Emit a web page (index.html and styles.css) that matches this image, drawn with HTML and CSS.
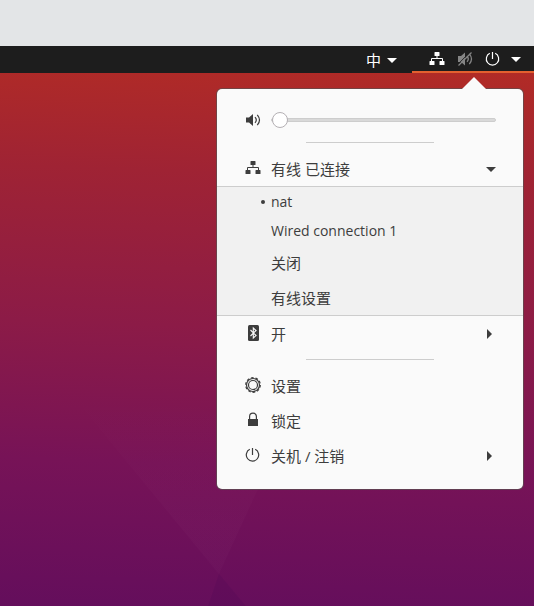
FILE: index.html
```html
<!DOCTYPE html>
<html lang="zh-CN">
<head>
<meta charset="utf-8">
<meta name="viewport" content="width=device-width, initial-scale=1">
<title>系统菜单</title>
<link rel="stylesheet" href="styles.css">
</head>
<body>
<svg class="sprite" aria-hidden="true">
  <symbol id="network" viewBox="0 0 16 16">
    <path fill="currentColor" d="M6 1h4q.5 0 .5.5v3q0 .5-.5.5H8.500v2H13q1 0 1 1v2h1q.5 0 .5.5v3q0 .5-.5.5h-4q-.5 0-.5-.5v-3q0-.5.5-.5h2V8H3v2h2q.5 0 .5.5v3q0 .5-.5.5H1q-.5 0-.5-.5v-3q0-.5.5-.5h1V8q0-1 1-1h4.500V5H6q-.5 0-.5-.5v-3Q5.500 1 6 1z"/>
  </symbol>
  <symbol id="speaker" viewBox="0 0 16 16">
    <path fill="currentColor" d="M1 5.500h3L8 2v12l-4-3.500H1z"/>
    <path fill="none" stroke="currentColor" stroke-width="1.200" d="M10 5.200q2.600 2.800 0 5.600M12.300 2.800q4.400 5.200 0 10.400"/>
  </symbol>
  <symbol id="muted" viewBox="0 0 16 16">
    <path fill="currentColor" d="M1 5h3l4-3.500v13L4 11H1z"/>
    <path fill="none" stroke="currentColor" stroke-width="1.300" d="M10 5.200q2.600 2.800 0 5.600M12.300 2.800q4.400 5.200 0 10.400"/>
    <path stroke="#1d1d1d" stroke-width="1" d="M1 13.200 13.200 1"/>
    <path stroke="currentColor" stroke-width="1.200" d="M1.500 14.500 14.500 1.500"/>
  </symbol>
  <symbol id="power" viewBox="0 0 16 16">
    <path fill="none" stroke="currentColor" stroke-width="1.200" d="M4.800 2.300a6.200 6.200 0 1 0 5.400 0M7.500 1v7"/>
  </symbol>
  <symbol id="bluetooth" viewBox="0 0 16 16">
    <rect x="3" y="0" width="11" height="16" rx="1.500" fill="currentColor"/>
    <path fill="none" stroke="#fafafa" stroke-width="1.100" d="m5.500 5 5.600 5.500-2.800 2.500V3L11.100 5.500l-5.600 5.500"/>
  </symbol>
  <symbol id="gear" viewBox="0 0 16 16">
    <circle cx="8" cy="8" r="7.300" fill="none" stroke="currentColor" stroke-width="1.200" stroke-dasharray="2.700 1.887"/>
    <circle cx="8" cy="8" r="6.500" fill="none" stroke="currentColor" stroke-width="1.200"/>
    <circle cx="8" cy="8" r="4.500" fill="none" stroke="currentColor" stroke-width="1.200"/>
  </symbol>
  <symbol id="lock" viewBox="0 0 16 16">
    <path fill="currentColor" d="M3 7h10v7H3z"/>
    <path fill="none" stroke="currentColor" stroke-width="1.200" d="M4.600 7V4.600a3.400 3.400 0 0 1 6.800 0V7"/>
  </symbol>
  <symbol id="down" viewBox="0 0 10 10">
    <path fill="currentColor" d="M0 3h10L5 8z"/>
  </symbol>
  <symbol id="right" viewBox="0 0 10 10">
    <path fill="currentColor" d="M1 0v10l5-5z"/>
  </symbol>
</svg>

<div class="window-edge"></div>
<header class="topbar">
  <button class="input-source" type="button" aria-label="输入法">中<svg class="arrow"><use href="#down"/></svg></button>
  <button class="system" type="button" aria-label="系统" aria-expanded="true">
    <svg class="icon"><use href="#network"/></svg>
    <svg class="icon dim"><use href="#muted"/></svg>
    <svg class="icon"><use href="#power"/></svg>
    <svg class="arrow"><use href="#down"/></svg>
  </button>
</header>

<main class="desktop">
  <div class="menu">
    <div class="volume">
      <svg class="icon"><use href="#speaker"/></svg>
      <input class="slider" type="range" min="0" max="100" value="0" aria-label="音量">
    </div>
    <hr class="separator">
    <button class="item" type="button" aria-expanded="true">
      <svg class="icon"><use href="#network"/></svg>
      <span class="label">有线 已连接</span>
      <svg class="arrow"><use href="#down"/></svg>
    </button>
    <div class="submenu">
      <button class="subitem latin current" type="button">nat</button>
      <button class="subitem latin" type="button">Wired connection 1</button>
      <button class="subitem" type="button">关闭</button>
      <button class="subitem" type="button">有线设置</button>
    </div>
    <button class="item" type="button">
      <svg class="icon"><use href="#bluetooth"/></svg>
      <span class="label">开</span>
      <svg class="arrow"><use href="#right"/></svg>
    </button>
    <hr class="separator">
    <button class="item" type="button">
      <svg class="icon"><use href="#gear"/></svg>
      <span class="label">设置</span>
    </button>
    <button class="item" type="button">
      <svg class="icon"><use href="#lock"/></svg>
      <span class="label">锁定</span>
    </button>
    <button class="item" type="button">
      <svg class="icon"><use href="#power"/></svg>
      <span class="label">关机 / 注销</span>
      <svg class="arrow"><use href="#right"/></svg>
    </button>
  </div>
</main>
</body>
</html>
```
FILE: styles.css
```css
* {
  box-sizing: border-box;
}

body {
  display: flex;
  flex-direction: column;
  min-height: 100vh;
  margin: 0;
  font: 15px/20px "Open Sans", "Noto Sans CJK SC", sans-serif;
  color: #3d3d3d;
}

button {
  margin: 0;
  padding: 0;
  border: 0;
  background: none;
  color: inherit;
  font: inherit;
  text-align: left;
}

.sprite {
  display: none;
}

.icon {
  flex: none;
  width: 16px;
  height: 16px;
}

.arrow {
  flex: none;
  width: 10px;
  height: 10px;
}

.window-edge {
  height: 46px;
  background: #e3e5e7;
}

.topbar {
  display: flex;
  justify-content: flex-end;
  height: 27px;
  background: #1d1d1d;
  color: #fff;
}

.input-source {
  display: flex;
  align-items: center;
  gap: 6px;
  padding: 0 15px;
}

.system {
  display: flex;
  align-items: center;
  gap: 12px;
  padding: 0 13px 0 17px;
  border-bottom: 2px solid #e3602f;
}

.system .arrow {
  margin-left: -2px;
}

.dim {
  color: #858585;
}

.desktop {
  position: relative;
  flex: 1;
  padding: 16px 11px;
  background: linear-gradient(182deg, #b12b26 0%, #9f2334 20%, #8c1b47 48%, #771357 73%, #640e5c 100%);
}

/* Faint facets of the wallpaper */
.desktop::before,
.desktop::after {
  content: "";
  position: absolute;
  inset: 0;
}

.desktop::before {
  background: linear-gradient(transparent 60%, rgba(255, 200, 220, 0.02) 85%);
  clip-path: polygon(0 44%, 52% 70%, 41% 94%);
}

.desktop::after {
  background: rgba(60, 0, 80, 0.12);
  clip-path: polygon(41% 94%, 46% 100%, 39% 100%);
}

.menu {
  position: relative;
  z-index: 1;
  width: 306px;
  margin-left: auto;
  padding: 16px 0;
  border-radius: 5px;
  background: #fafafa;
  box-shadow: 0 0 0 1px rgba(90, 80, 80, 0.7);
}

.menu::before {
  content: "";
  position: absolute;
  right: 37px;
  bottom: 100%;
  width: 24px;
  height: 12px;
  background: #fafafa;
  clip-path: polygon(50% 0, 100% 100%, 0 100%);
}

.volume,
.item {
  display: flex;
  align-items: center;
  gap: 10px;
  width: 100%;
  height: 35px;
  padding: 0 27px 0 28px;
}

.volume {
  height: 29px;
}

.item .icon {
  margin-bottom: 2px;
}

.label {
  flex: 1;
}

.slider {
  flex: 1;
  min-width: 0;
  height: 16px;
  margin: 0;
  appearance: none;
  background: none;
}

.slider::-webkit-slider-runnable-track {
  height: 4px;
  border: 1px solid #cdcdcd;
  border-radius: 2px;
  background: #d9d9d9;
}

.slider::-webkit-slider-thumb {
  appearance: none;
  width: 16px;
  height: 16px;
  margin-top: -7px;
  border: 1px solid #b4b0b4;
  border-radius: 50%;
  background: #fff;
}

.separator {
  width: 128px;
  height: 1px;
  margin: 8px auto;
  border: 0;
  background: #cdcdcd;
}

.submenu {
  border: solid #cdcdcd;
  border-width: 1px 0;
  background: #f1f1f1;
}

.subitem {
  display: flex;
  align-items: center;
  width: 100%;
  height: 35px;
  padding-left: 54px;
}

.latin {
  height: 29px;
  font-size: 14px;
}

.current::before {
  content: "";
  width: 4px;
  height: 4px;
  margin-left: -10px;
  margin-right: 6px;
  border-radius: 50%;
  background: #3d3d3d;
}
```
